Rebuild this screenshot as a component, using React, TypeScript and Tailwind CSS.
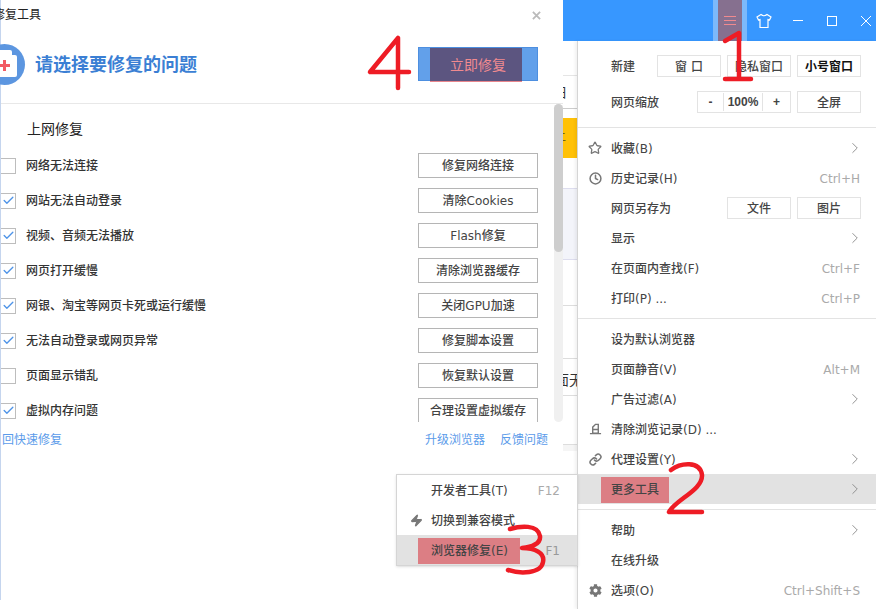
import { Check, ChevronRight, Clock, Link, Star, Zap } from "lucide-react";
import { FaCog } from "react-icons/fa";

const font = "font-['DejaVu_Sans','Noto_Sans_CJK_SC',sans-serif]";

const problems = [
  { label: "网络无法连接", action: "修复网络连接", checked: false },
  { label: "网站无法自动登录", action: "清除Cookies", checked: true },
  { label: "视频、音频无法播放", action: "Flash修复", checked: true },
  { label: "网页打开缓慢", action: "清除浏览器缓存", checked: true },
  { label: "网银、淘宝等网页卡死或运行缓慢", action: "关闭GPU加速", checked: true },
  { label: "无法自动登录或网页异常", action: "修复脚本设置", checked: true },
  { label: "页面显示错乱", action: "恢复默认设置", checked: false },
  { label: "虚拟内存问题", action: "合理设置虚拟缓存", checked: true },
];

const MenuRow = ({ icon, label, hint, arrow, active, children }: any) => (
  <div className={`flex h-[30px] items-center pr-[15px] text-[12px] font-medium text-[#444] ${active ? "bg-[#e2e2e2]" : ""}`}>
    <div className="flex w-[33px] justify-end pr-[9px] text-[#777]">{icon}</div>
    <span className="relative top-[1px]">
      {active && <span className="absolute -inset-x-[10px] -inset-y-[4px] bg-[#dc7e84]" />}
      <span className="relative">{label}</span>
    </span>
    <div className="ml-auto flex items-center">
      {hint && <span className="relative top-[1px] pr-[1px] font-normal text-[#aaa]">{hint}</span>}
      {arrow && <ChevronRight size={18} strokeWidth={1.2} className="-mr-[3px] text-[#888]" />}
      {children}
    </div>
  </div>
);

const MenuBtn = ({ w, strong, children }: any) => (
  <div className={`flex h-[22px] items-center justify-center border border-[#e3e3e3] pt-[2px] text-[12px] ${strong ? "font-semibold text-[#111]" : "font-medium text-[#444]"} ${w}`}>
    {children}
  </div>
);

const Divider = () => <div className="my-[5px] h-[1px] bg-[#e3e3e3]" />;

export default function App() {
  return (
    <div className={`relative h-[609px] w-[876px] overflow-hidden bg-white ${font}`}>
      {/* browser page showing between dialog and menu */}
      <div className="absolute inset-y-0 left-[563px] right-0 flex flex-col overflow-hidden whitespace-nowrap bg-white text-[14px] leading-none text-[#333]">
        <div className="h-[41px] shrink-0 bg-[#3797ff]" />
        <div className="flex h-[35px] shrink-0 items-center justify-end border-b border-[#e5e5e5] pb-[2px]">
          <div className="flex h-[16px] w-[10px] items-center justify-center overflow-hidden bg-black">
            <div className="h-[14px] w-[14px] shrink-0 rounded-full border-[3px] border-[#1d49b5] bg-[#5f8f7f]" />
          </div>
        </div>
        <div className="flex h-[33px] shrink-0 items-center border-b border-[#ccc]">
          <span className="-ml-[9px] text-[13px]">彐</span>
        </div>
        <div className="h-[9px] shrink-0" />
        <div className="flex h-[40px] shrink-0 items-center bg-[#ffc107] text-[#5a4a10]">
          <span className="-ml-[7px] text-[10px]">二</span>
        </div>
        <div className="h-[30px] shrink-0" />
        <div className="h-[72px] shrink-0 border-y border-[#dde] bg-[#f3f4fa]" />
        <div className="h-[46px] shrink-0 border-b border-[#ddd]" />
        <div className="h-[53px] shrink-0 border-b border-[#ddd]" />
        <div className="flex h-[37px] shrink-0 items-center border-b border-[#ddd] pt-[6px]">
          <span className="-ml-[8px]">面无</span>
        </div>
        <div className="h-[49px] shrink-0 border-b border-[#ddd]" />
        <div className="h-[6px] shrink-0 bg-[#f5f5f5]" />
      </div>

      {/* repair dialog */}
      <div className="absolute left-0 top-0 h-[600px] w-[563px] border-l border-[#c5d5ee] bg-white">
        <div className="flex h-[30px] items-center text-[12px] text-[#222]">
          <span className="-ml-[8px]">修复工具</span>
          <svg viewBox="0 0 10 10" className="ml-auto mr-[22px] h-[9px] w-[9px]" stroke="#bbb" strokeWidth="2">
            <path d="M1 1 L9 9 M9 1 L1 9" />
          </svg>
        </div>
        <div className="flex h-[74px] items-center border-b border-[#e8e8e8] pb-[5px]">
          <div className="relative -ml-[17px] flex h-[41px] w-[41px] items-center justify-center rounded-full bg-[#5c96e0]">
            <div className="relative mt-[3px] h-[22px] w-[25px] rounded-[2px] bg-white">
              <div className="absolute -top-[5px] left-[5px] h-[6px] w-[15px] rounded-t-[2px] bg-white" />
              <div className="absolute left-[7px] top-[9px] h-[3px] w-[11px] bg-[#f25b64]" />
              <div className="absolute left-[11px] top-[5px] h-[11px] w-[3px] bg-[#f25b64]" />
            </div>
          </div>
          <h1 className="ml-[10px] text-[18px] font-bold text-[#3b7fd4]">请选择要修复的问题</h1>
          <div className="relative ml-auto mr-[25px] flex h-[34px] w-[120px] items-center justify-center border border-[#4d8fe0] bg-[#62a0ea] text-[14px] text-[#f08a8f]">
            <div className="absolute -bottom-[2px] left-[11px] top-0 w-[92px] border-b border-[#e8858c] bg-[#5c5580]" />
            <span className="relative top-[1px]">立即修复</span>
          </div>
        </div>

        <div className="relative h-[318px] overflow-hidden">
          <div className="pl-[26px] pt-[15px] text-[14px] leading-[20px] text-[#222]">上网修复</div>
          <div className="pt-[9px]">
            {problems.map((p) => (
              <div key={p.label} className="flex h-[35px] items-center text-[12px] font-medium text-[#333]">
                <div className="-ml-[1px] flex h-[16px] w-[16px] items-center justify-center border border-[#bdbdbd] bg-white">
                  {p.checked && <Check size={13} strokeWidth={2.5} className="text-[#4f94e8]" />}
                </div>
                <span className="ml-[10px]">{p.label}</span>
                <div className="ml-auto mr-[25px] flex h-[25px] w-[120px] items-center justify-center border border-[#b5b5b5] text-[#444]">
                  {p.action}
                </div>
              </div>
            ))}
          </div>
          {/* scrollbar */}
          <div className="absolute bottom-0 right-0 top-0 w-[9px] rounded-full bg-[#f0f0f0]">
            <div className="h-[148px] rounded-full bg-[#cecece]" />
          </div>
        </div>

        <div className="flex h-[34px] items-center pt-[2px] text-[12px] text-[#5b9bea]">
          <span className="pl-[1px]">回快速修复</span>
          <span className="ml-auto">升级浏览器</span>
          <span className="ml-[15px] mr-[15px]">反馈问题</span>
        </div>
      </div>

      {/* main menu */}
      <div className="absolute bottom-0 left-[577px] right-0 top-[41px] border-l border-[#d5d5d5] bg-white shadow-[-2px_0_3px_rgba(0,0,0,0.06)]">
        <div className="flex h-[87px] flex-col justify-center gap-[14px] border-b border-[#e3e3e3] pl-[33px] pr-[15px] text-[12px] font-medium text-[#444]">
          <div className="flex items-center">
            <span className="relative top-[1px]">新建</span>
            <div className="ml-auto flex gap-[6px]">
              <MenuBtn w="w-[64px]">窗 口</MenuBtn>
              <MenuBtn w="w-[64px]">隐私窗口</MenuBtn>
              <MenuBtn w="w-[64px]" strong>小号窗口</MenuBtn>
            </div>
          </div>
          <div className="flex items-center">
            <span className="relative top-[1px]">网页缩放</span>
            <div className="ml-auto flex gap-[6px]">
              <div className="flex h-[22px] w-[94px] items-center border border-[#e3e3e3] text-center font-['Liberation_Sans',sans-serif] font-bold">
                <span className="w-[26px] border-r border-[#e3e3e3]">-</span>
                <span className="w-[39px] border-r border-[#e3e3e3]">100%</span>
                <span className="flex-1">+</span>
              </div>
              <MenuBtn w="w-[64px]">全屏</MenuBtn>
            </div>
          </div>
        </div>
        <div className="pt-[5px]">
          <MenuRow icon={<Star size={14} strokeWidth={2.2} />} label="收藏(B)" arrow />
          <MenuRow icon={<Clock size={13} strokeWidth={2.8} />} label="历史记录(H)" hint="Ctrl+H" />
          <MenuRow label="网页另存为">
            <div className="flex gap-[6px]">
              <MenuBtn w="w-[64px]">文件</MenuBtn>
              <MenuBtn w="w-[64px]">图片</MenuBtn>
            </div>
          </MenuRow>
          <MenuRow label="显示" arrow />
          <MenuRow label="在页面内查找(F)" hint="Ctrl+F" />
          <MenuRow label="打印(P) ..." hint="Ctrl+P" />
        </div>
        <Divider />
        <MenuRow label="设为默认浏览器" />
        <MenuRow label="页面静音(V)" hint="Alt+M" />
        <MenuRow label="广告过滤(A)" arrow />
        <MenuRow
          icon={
            <svg viewBox="0 0 14 12" className="h-[12px] w-[13px]" fill="none" stroke="#777" strokeWidth="1.5">
              <path d="M4 10.5 V4 L7 1 H10 V10.5 Z M4 6.5 H10 M1 11 H13" />
            </svg>
          }
          label="清除浏览记录(D) ..."
        />
        <MenuRow icon={<Link size={13} strokeWidth={2.8} />} label="代理设置(Y)" arrow />
        <MenuRow label="更多工具" arrow active />
        <Divider />
        <MenuRow label="帮助" arrow />
        <MenuRow label="在线升级" />
        <MenuRow icon={<FaCog size={13} />} label="选项(O)" hint="Ctrl+Shift+S" />
      </div>

      {/* title bar buttons */}
      <div className="absolute right-0 top-0 flex h-[41px] w-[163px] items-center text-white">
        <div className="flex h-[41px] w-[34px] items-center justify-center border-x-[5px] border-[#7cb9fb] bg-[#86708f]">
          <div className="flex w-[12px] flex-col gap-[3px]">
            <div className="h-[1px] bg-[#f08a8f]" />
            <div className="h-[1px] bg-[#f08a8f]" />
            <div className="h-[1px] bg-[#f08a8f]" />
          </div>
        </div>
        <svg viewBox="0 0 16 16" className="ml-[9px] h-[16px] w-[16px]" fill="none" stroke="white" strokeWidth="1.2">
          <path d="M5 1.5 L1 4 L2.5 7 L4 6.5 V14.5 H12 V6.5 L13.5 7 L15 4 L11 1.5 Q8 4 5 1.5 Z" />
        </svg>
        <div className="ml-[21px] h-[1px] w-[10px] bg-white" />
        <div className="ml-[24px] h-[10px] w-[10px] border border-white" />
        <svg viewBox="0 0 12 12" className="ml-[23px] h-[12px] w-[12px]" stroke="white" strokeWidth="1">
          <path d="M1 1 L11 11 M11 1 L1 11" />
        </svg>
      </div>

      {/* more tools submenu */}
      <div className="absolute left-[396px] top-[474px] h-[92px] w-[182px] border border-[#d5d5d5] bg-white shadow-sm">
        <div className="flex h-[30px] items-center pl-[34px] pr-[17px] pt-[2px] text-[12px] font-medium text-[#444]">
          开发者工具(T)
          <span className="ml-auto font-normal text-[#aaa]">F12</span>
        </div>
        <div className="flex h-[30px] items-center pl-[13px] pt-[2px] text-[12px] font-medium text-[#444]">
          <Zap size={13} fill="#777" className="-mt-[2px] mr-[8px] text-[#777]" />
          切换到兼容模式
        </div>
        <div className="flex h-[30px] items-center bg-[#e2e2e2] pl-[34px] pr-[17px] pt-[2px] text-[12px] font-medium text-[#444]">
          <span className="relative">
            <span className="absolute -inset-y-[4px] -left-[13px] -right-[12px] bg-[#dc7e84]" />
            <span className="relative">浏览器修复(E)</span>
          </span>
          <span className="ml-auto font-normal text-[#999]">F1</span>
        </div>
      </div>

      {/* hand-drawn red numbers */}
      <svg viewBox="0 0 876 609" className="pointer-events-none absolute inset-0 h-[609px] w-[876px]" fill="none" stroke="#ee1c25" strokeWidth="4.5" strokeLinecap="round" strokeLinejoin="round">
        <path d="M725 41 L739 33 V79 M725 79 H751" />
        <path d="M671 470 C680 463 700 460 702 475 C703 490 675 500 669 512 H702" />
        <path d="M510 529 C520 526 538 524 540 536 C541 545 530 547 522 548 C535 548 545 553 543 562 C541 574 520 574 508 570" />
        <path d="M398 38 L370 72 H409 M398 38 V88" />
      </svg>
    </div>
  );
}
